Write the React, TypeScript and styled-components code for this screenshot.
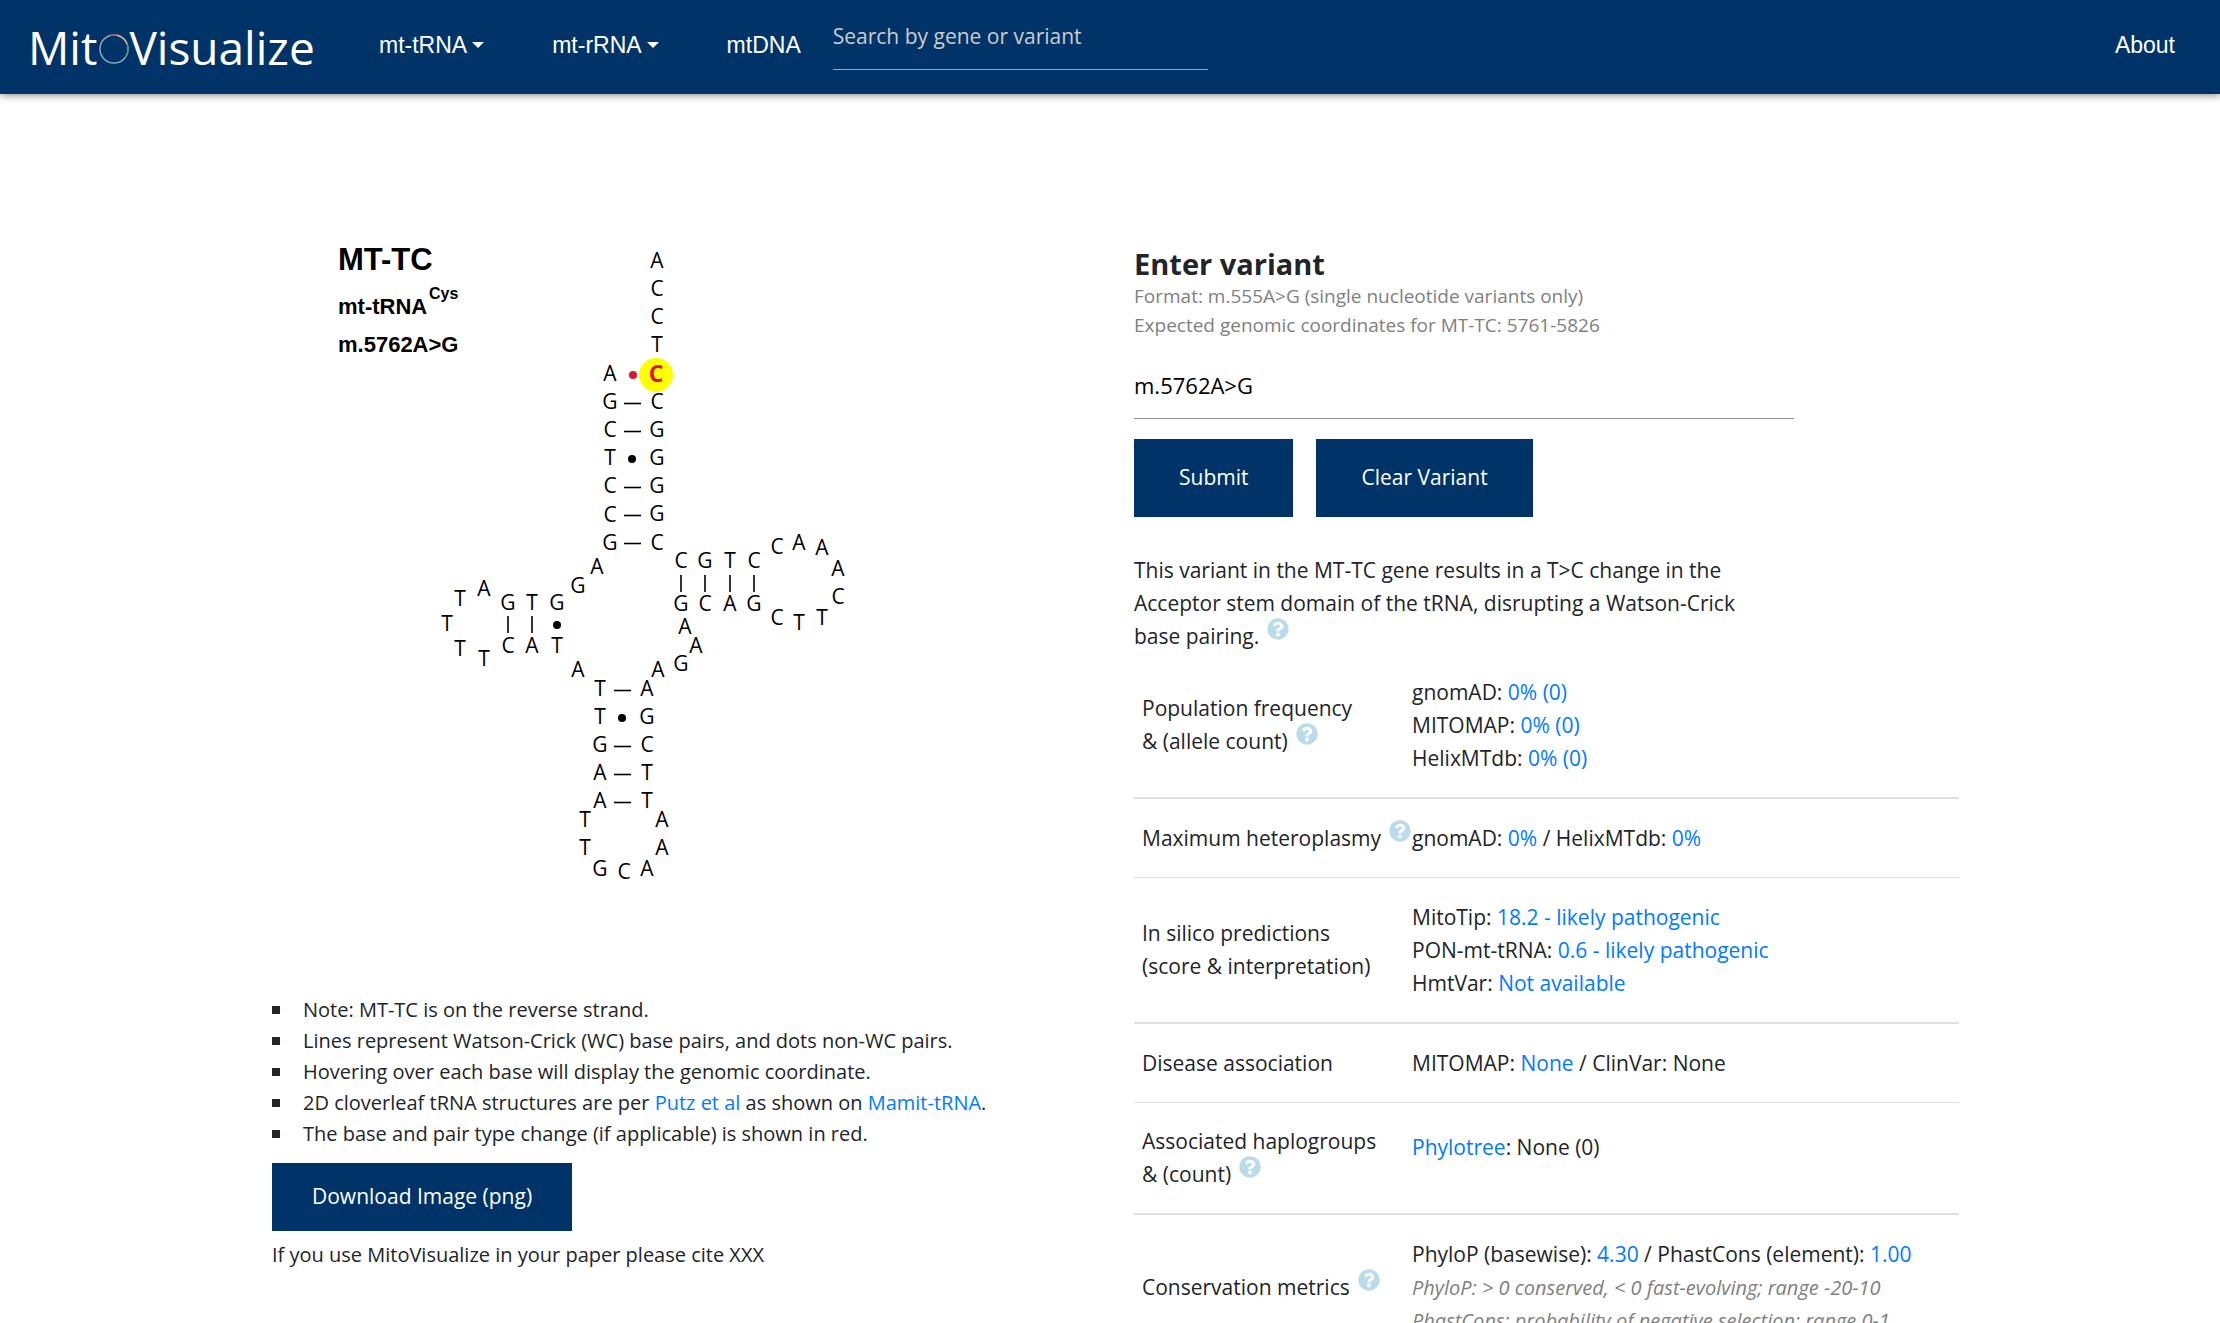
import React from "react";
import styled, { createGlobalStyle } from "styled-components";
import { FaQuestionCircle } from "react-icons/fa";

const navy = "#003468";
const sans = `"Open Sans", "Noto Sans", sans-serif`;
const arial = `"Liberation Sans", Arial, sans-serif`;

const GlobalStyle = createGlobalStyle`
  *, *::before, *::after { box-sizing: border-box; }
  body {
    margin: 0;
    background: #fff;
    color: #212529;
    font-family: ${sans};
    font-size: 21px;
    line-height: 33px;
  }
  h1, p, ul { margin: 0; padding: 0; }
`;

const Page = styled.div`
  height: 100vh;
  overflow: hidden;
`;

const Header = styled.header`
  display: flex;
  align-items: flex-start;
  height: 94px;
  padding: 0 45px 0 28px;
  background: ${navy};
  box-shadow: 0 1px 8px rgba(0, 0, 0, 0.5);
`;

const Brand = styled.a`
  display: flex;
  align-items: baseline;
  width: 351px;
  padding-top: 14px;
  color: #fff;
  font-size: 46px;
  font-weight: 500;
  line-height: 66px;
  text-decoration: none;
`;

const Ring = styled.svg`
  width: 32px;
  height: 32px;
`;

const Nav = styled.nav`
  display: flex;
  gap: 68px;
`;

const navText = `
  display: flex;
  align-items: center;
  gap: 5px;
  padding: 30px 0;
  border: 0;
  background: none;
  color: #fff;
  font-family: ${arial};
  font-size: 23px;
  line-height: 30px;
  text-decoration: none;
`;
const NavLink = styled.a`${navText}`;
const NavButton = styled.button`${navText}`;

const Caret = styled.span`
  border: 6px solid transparent;
  border-top-color: #fff;
  border-bottom: 0;
`;

const SearchInput = styled.input`
  width: 375px;
  height: 70px;
  margin-left: 32px;
  margin-right: auto;
  padding: 3px 0 0;
  border: 0;
  border-bottom: 1px solid #9aa5b1;
  background: none;
  color: #fff;
  font: 21px ${sans};
  &::placeholder { color: #ccc; opacity: 1; }
`;

const Main = styled.main`
  display: grid;
  grid-template-columns: 1fr 1fr;
  max-width: 1724px;
  margin: 0 auto;
`;

const DiagramColumn = styled.section`
  padding: 136px 0 0 24px;
`;

const VariantColumn = styled.section`
  padding: 151px 13px 0 24px;
`;

const Cloverleaf = styled.svg`
  display: block;
  width: 640px;
  height: 764px;
`;

const BaseText = styled.text<{ $hit?: boolean }>`
  font-family: ${sans};
  font-size: ${(p) => (p.$hit ? 23 : 21)}px;
  font-weight: ${(p) => (p.$hit ? 700 : 400)};
  fill: ${(p) => (p.$hit ? "#dc143c" : "#000")};
  text-anchor: middle;
`;

const CaptionText = styled.text<{ $size: number }>`
  font-family: ${arial};
  font-size: ${(p) => p.$size}px;
  font-weight: 700;
  fill: #000;
`;

const Notes = styled.ul`
  list-style: none;
  font-size: 20px;
  line-height: 31px;
`;

const Note = styled.li`
  display: flex;
  align-items: center;
  gap: 23px;
  &::before {
    content: "";
    width: 8px;
    height: 8px;
    background: #212529;
  }
`;

const Link = styled.a`
  color: #007bff;
  text-decoration: none;
`;

const Button = styled.button<{ $compact?: boolean }>`
  padding: ${(p) => (p.$compact ? "17px 40px 18px" : "22px 45px 23px")};
  border: 0;
  background: ${navy};
  color: #fff;
  font: 21px/33px ${sans};
`;

const Download = styled.div`
  padding: 14px 0 7px;
`;

const Cite = styled.p`
  font-size: 20px;
`;

const Title = styled.h1`
  font-size: 29px;
  line-height: 37px;
`;

const Hint = styled.label`
  display: block;
  color: #808080;
  font-size: 19px;
  line-height: 29px;
`;

const VariantInput = styled.input`
  display: block;
  width: 660px;
  max-width: 100%;
  height: 79px;
  padding: 12px 0 0;
  border: 0;
  border-bottom: 1px solid #949494;
  background: none;
  color: #000;
  font: 22px ${sans};
`;

const Actions = styled.div`
  display: flex;
  gap: 23px;
  margin: 20px 0 37px;
`;

const Summary = styled.p`
  max-width: 640px;
`;

const Help = styled(FaQuestionCircle)`
  width: 22px;
  height: 22px;
  margin: -8px 0 4px 8px;
  color: #b9dbea;
`;

const Table = styled.table`
  width: 100%;
  border-collapse: collapse;
`;

const Row = styled.tr<{ $strong?: boolean }>`
  border-bottom: ${(p) => (p.$strong ? 2 : 1)}px solid #e0e0e0;
`;

const Label = styled.th`
  width: 278px;
  padding: 22px 0 22px 8px;
  font-weight: 400;
  text-align: left;
  white-space: nowrap;
`;

const Value = styled.td<{ $raised?: boolean }>`
  padding: 23px 0 ${(p) => (p.$raised ? 45 : 22)}px;
`;

const Fine = styled.em`
  color: #808080;
  font-size: 20px;
`;

type Glyph = [string, number, number];

const column = (letters: string, x: number, y: number): Glyph[] =>
  letters.split("").map((c, i) => [c, x, Math.round(y + i * 28.1)]);

const row = (letters: string, x: number, y: number): Glyph[] =>
  letters.split("").map((c, i) => [c, Math.round(x + i * 24.4), y]);

const bases: Glyph[] = [
  ...column("ACCT", 385, 38),
  ...column("CGGGGC", 385, 179),
  ...column("AGCTCCG", 338, 151),
  ["A", 325, 344], ["G", 306, 363],
  ...row("GTG", 236, 380),
  ...row("CAT", 236, 423),
  ["A", 212, 366], ["T", 188, 376], ["T", 175, 401], ["T", 188, 426], ["T", 212, 436],
  ["A", 306, 447],
  ...column("TTGAA", 328, 466),
  ...column("AGCTT", 375, 466),
  ["T", 313, 597], ["T", 313, 625], ["G", 328, 646], ["C", 352, 649], ["A", 375, 646],
  ["A", 390, 625], ["A", 390, 597],
  ["A", 386, 447], ["G", 409, 441], ["A", 424, 423], ["A", 413, 404],
  ...row("CGTC", 409, 338),
  ...row("GCAG", 409, 381),
  ["C", 505, 324], ["A", 527, 320], ["A", 550, 325], ["A", 566, 346],
  ["C", 566, 374], ["T", 550, 395], ["T", 527, 400], ["C", 505, 395],
];

const horizontal: [number, number][] = [
  [352, 173], [352, 201], [352, 257], [352, 285], [352, 313],
  [342, 460], [342, 516], [342, 544], [342, 572],
];
const vertical: [number, number][] = [
  [409, 345], [433, 345], [458, 345], [482, 345], [236, 386], [260, 386],
];
const dots: [number, number][] = [[360, 229], [350, 488], [285, 395]];

function Diagram() {
  return (
    <Cloverleaf viewBox="0 0 640 764" role="img" aria-label="MT-TC cloverleaf structure">
      <CaptionText $size={31} x={66} y={40}>MT-TC</CaptionText>
      <CaptionText $size={22} x={66} y={84}>mt-tRNA</CaptionText>
      <CaptionText $size={16} x={157} y={69}>Cys</CaptionText>
      <CaptionText $size={22} x={66} y={122}>m.5762A&gt;G</CaptionText>
      <circle cx={384} cy={145} r={17} fill="#ff0" />
      <BaseText $hit x={384} y={152}>C</BaseText>
      <circle cx={361} cy={145} r={4} fill="#dc143c" />
      {bases.map(([c, x, y]) => (
        <BaseText key={`${x}-${y}`} x={x} y={y}>{c}</BaseText>
      ))}
      <g stroke="#000" strokeWidth={1.6}>
        {horizontal.map(([x, y]) => (
          <line key={`${x}-${y}`} x1={x} x2={x + 17} y1={y + 0.5} y2={y + 0.5} />
        ))}
        {vertical.map(([x, y]) => (
          <line key={`${x}-${y}`} x1={x} x2={x} y1={y} y2={y + 17} />
        ))}
      </g>
      {dots.map(([x, y]) => (
        <circle key={`${x}-${y}`} cx={x} cy={y} r={4} />
      ))}
    </Cloverleaf>
  );
}

export default function App() {
  return (
    <Page>
      <GlobalStyle />
      <Header>
        <Brand href="#" aria-label="MitoVisualize">
          Mit
          <Ring viewBox="0 0 32 32" fill="none" strokeWidth="1.4">
            <circle cx="17" cy="16" r="14" stroke="#8fb0c4" />
            <path d="M13 2.6A14 14 0 0 1 20 2.3" stroke="#c8504a" />
            <path d="M20 2.3A14 14 0 0 1 30 11" stroke="#e3ac7c" />
            <path d="M30 11A14 14 0 0 1 28 25" stroke="#5f8f86" />
          </Ring>
          Visualize
        </Brand>
        <Nav>
          <NavButton>mt-tRNA<Caret /></NavButton>
          <NavButton>mt-rRNA<Caret /></NavButton>
          <NavLink href="#">mtDNA</NavLink>
        </Nav>
        <SearchInput aria-label="Search" placeholder="Search by gene or variant" />
        <NavLink href="#">About</NavLink>
      </Header>
      <Main>
        <DiagramColumn>
          <Diagram />
          <Notes>
            <Note>Note: MT-TC is on the reverse strand.</Note>
            <Note>Lines represent Watson-Crick (WC) base pairs, and dots non-WC pairs.</Note>
            <Note>Hovering over each base will display the genomic coordinate.</Note>
            <Note>
              <span>
                2D cloverleaf tRNA structures are per <Link href="#">Putz et al</Link> as shown on{" "}
                <Link href="#">Mamit-tRNA</Link>.
              </span>
            </Note>
            <Note>The base and pair type change (if applicable) is shown in red.</Note>
          </Notes>
          <Download><Button $compact>Download Image (png)</Button></Download>
          <Cite>If you use MitoVisualize in your paper please cite XXX</Cite>
        </DiagramColumn>
        <VariantColumn>
          <Title>Enter variant</Title>
          <Hint htmlFor="variant">
            Format: m.555A&gt;G (single nucleotide variants only)
            <br />
            Expected genomic coordinates for MT-TC: 5761-5826
          </Hint>
          <VariantInput id="variant" defaultValue="m.5762A>G" />
          <Actions>
            <Button>Submit</Button>
            <Button>Clear Variant</Button>
          </Actions>
          <Summary>
            This variant in the MT-TC gene results in a T&gt;C change in the Acceptor stem domain of
            the tRNA, disrupting a Watson-Crick base pairing.<Help />
          </Summary>
          <Table>
            <tbody>
              <Row $strong>
                <Label scope="row">Population frequency<br />&amp; (allele count)<Help /></Label>
                <Value>
                  gnomAD: <Link href="#">0% (0)</Link><br />
                  MITOMAP: <Link href="#">0% (0)</Link><br />
                  HelixMTdb: <Link href="#">0% (0)</Link>
                </Value>
              </Row>
              <Row>
                <Label scope="row">Maximum heteroplasmy<Help /></Label>
                <Value>
                  gnomAD: <Link href="#">0%</Link> / HelixMTdb: <Link href="#">0%</Link>
                </Value>
              </Row>
              <Row $strong>
                <Label scope="row">In silico predictions<br />(score &amp; interpretation)</Label>
                <Value>
                  MitoTip: <Link href="#">18.2 - likely pathogenic</Link><br />
                  PON-mt-tRNA: <Link href="#">0.6 - likely pathogenic</Link><br />
                  HmtVar: <Link href="#">Not available</Link>
                </Value>
              </Row>
              <Row>
                <Label scope="row">Disease association</Label>
                <Value>
                  MITOMAP: <Link href="#">None</Link> / ClinVar: None
                </Value>
              </Row>
              <Row $strong>
                <Label scope="row">Associated haplogroups<br />&amp; (count)<Help /></Label>
                <Value $raised><Link href="#">Phylotree</Link>: None (0)</Value>
              </Row>
              <Row>
                <Label scope="row">Conservation metrics<Help /></Label>
                <Value>
                  PhyloP (basewise): <Link href="#">4.30</Link> / PhastCons (element):{" "}
                  <Link href="#">1.00</Link><br />
                  <Fine>PhyloP: &gt; 0 conserved, &lt; 0 fast-evolving; range -20-10</Fine><br />
                  <Fine>PhastCons: probability of negative selection; range 0-1</Fine>
                </Value>
              </Row>
            </tbody>
          </Table>
        </VariantColumn>
      </Main>
    </Page>
  );
}
